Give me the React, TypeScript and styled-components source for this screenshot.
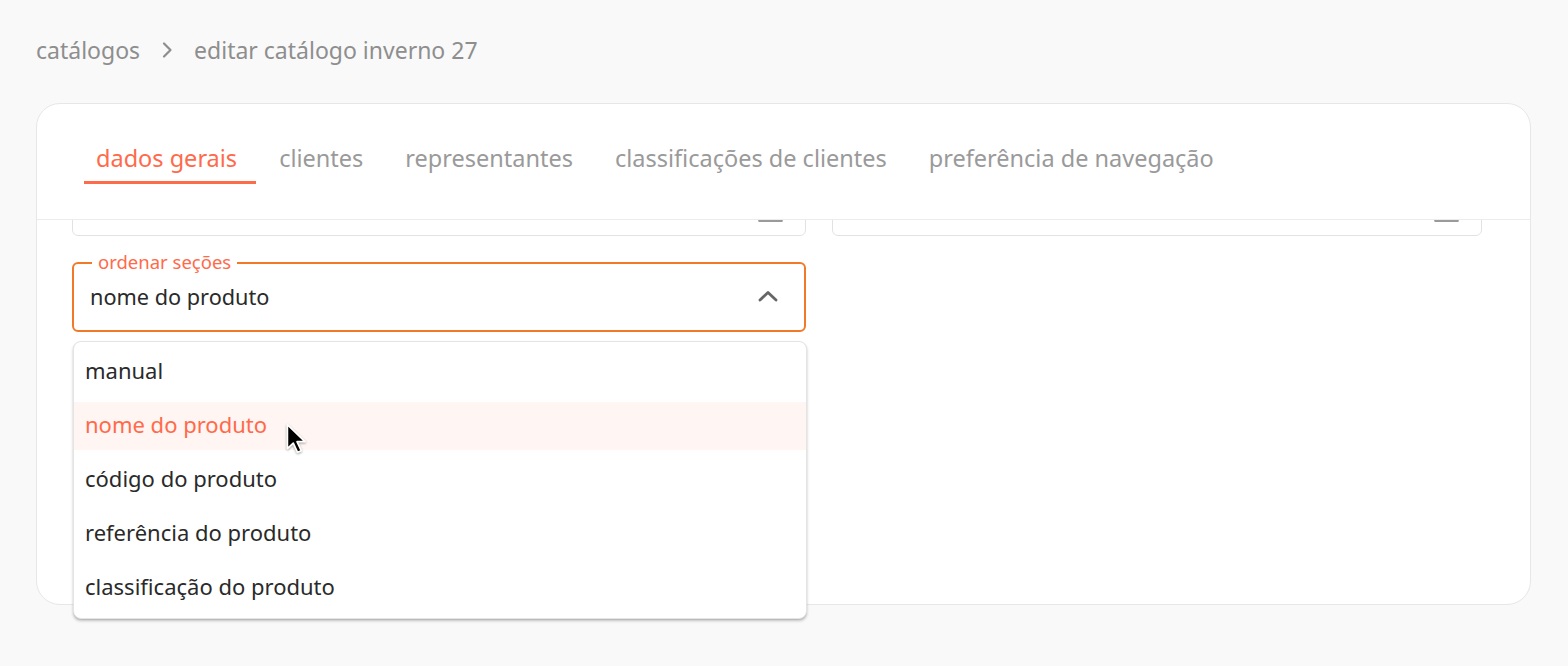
import React, { useLayoutEffect, useRef } from "react";
import styled, { createGlobalStyle } from "styled-components";

const GlobalStyle = createGlobalStyle`
  html, body {
    margin: 0;
    padding: 0;
    background: #f9f9f9;
    font-family: "Noto Sans", "Open Sans", sans-serif;
  }
  * { box-sizing: border-box; }
`;

const Page = styled.div`
  position: relative;
  width: 1568px;
  height: 666px;
  padding: 35px 37px 0 36px;
  overflow: hidden;
`;

const Breadcrumb = styled.nav`
  display: flex;
  align-items: center;
  gap: 21px;
  height: 30px;
  font-size: 23px;
  line-height: 30px;
  color: #8e8e8e;
`;

const Crumb = styled.span`
  white-space: nowrap;
`;

const Card = styled.section`
  margin-top: 38px;
  width: 1495px;
  height: 502px;
  background: #ffffff;
  border: 1px solid #e7e7e7;
  border-radius: 24px;
  display: flex;
  flex-direction: column;
  overflow: hidden;
`;

const TabBar = styled.div`
  flex: none;
  display: flex;
  align-items: flex-start;
  gap: 11px;
  height: 116px;
  padding: 30px 0 0 47px;
  border-bottom: 1px solid #ececec;
`;

const Tab = styled.button<{ $active?: boolean }>`
  height: 50px;
  padding: 0 19px 0 12px;
  border: none;
  background: none;
  font-family: inherit;
  font-size: 23.5px;
  line-height: 46px;
  color: ${(p) => (p.$active ? "#ff6a4a" : "#9a9a9a")};
  border-bottom: 3px solid ${(p) => (p.$active ? "#ff6a4a" : "transparent")};
  white-space: nowrap;
  cursor: pointer;
`;

const ScrollArea = styled.div`
  flex: 1;
  overflow-y: auto;
  scrollbar-width: none;
  &::-webkit-scrollbar { display: none; }
`;

const FormGrid = styled.div`
  display: grid;
  grid-template-columns: 734px 650px;
  column-gap: 26px;
  row-gap: 26px;
  align-items: start;
  padding: 24px 48px 400px 35px;
`;

const TextField = styled.div`
  height: 56px;
  border: 1px solid #e2e2e2;
  border-radius: 6px;
  display: flex;
  align-items: flex-end;
  justify-content: flex-end;
  padding: 0 22px 13px 0;
`;

const SelectBox = styled.div`
  position: relative;
  height: 70px;
  border: 2px solid #f07a2a;
  border-radius: 6px;
  display: flex;
  align-items: center;
  justify-content: space-between;
  padding: 0 26px 2px 16px;
`;

const FloatLabel = styled.span`
  position: absolute;
  top: -13px;
  left: 18px;
  padding: 0 6px;
  background: #ffffff;
  font-size: 18.5px;
  line-height: 22px;
  color: #ff6a4a;
`;

const SelectValue = styled.span`
  font-size: 21.7px;
  color: #2a2a2a;
`;

const Menu = styled.ul`
  position: absolute;
  top: 341px;
  left: 73px;
  width: 734px;
  margin: 0;
  padding: 6px 0;
  list-style: none;
  background: #ffffff;
  border: 1px solid #e4e4e4;
  border-radius: 8px;
  box-shadow: 0 2px 3px rgba(0, 0, 0, 0.22), 0 1px 1px rgba(0, 0, 0, 0.08);
  display: flex;
  flex-direction: column;
  gap: 6px;
`;

const MenuItem = styled.li<{ $selected?: boolean }>`
  height: 48px;
  display: flex;
  align-items: center;
  padding: 0 0 5px 11px;
  font-size: 22px;
  color: ${(p) => (p.$selected ? "#ff6a4a" : "#2a2a2a")};
  background: ${(p) => (p.$selected ? "#fff5f2" : "transparent")};
`;

const Pointer = styled.svg`
  position: absolute;
  top: 423px;
  left: 285px;
  filter: drop-shadow(0 1px 1px rgba(0, 0, 0, 0.35));
`;

const ChevronRight = () => (
  <svg width="12" height="18" viewBox="0 0 12 18" fill="none">
    <path d="M3 2.5 L9.5 9 L3 15.5" stroke="#8e8e8e" strokeWidth="2.2" strokeLinecap="round" strokeLinejoin="round" />
  </svg>
);

const ChevronUp = () => (
  <svg width="20" height="12" viewBox="0 0 20 12" fill="none">
    <path d="M2 10 L10 2.5 L18 10" stroke="#666666" strokeWidth="2.8" strokeLinecap="round" strokeLinejoin="round" />
  </svg>
);

const CalendarIcon = () => (
  <svg width="25" height="24" viewBox="0 0 25 24" fill="none">
    <rect x="1" y="2" width="23" height="21" rx="2" stroke="#9a9a9a" strokeWidth="2" />
    <rect x="1" y="7" width="23" height="2" fill="#9a9a9a" />
    <rect x="0.5" y="22" width="24" height="2" fill="#9a9a9a" />
  </svg>
);

const tabs = [
  "dados gerais",
  "clientes",
  "representantes",
  "classificações de clientes",
  "preferência de navegação",
];

const options = [
  "manual",
  "nome do produto",
  "código do produto",
  "referência do produto",
  "classificação do produto",
];

export default function App() {
  const scrollRef = useRef<HTMLDivElement>(null);
  useLayoutEffect(() => {
    if (scrollRef.current) scrollRef.current.scrollTop = 64;
  }, []);

  return (
    <>
      <GlobalStyle />
      <Page>
        <Breadcrumb>
          <Crumb>catálogos</Crumb>
          <ChevronRight />
          <Crumb>editar catálogo inverno 27</Crumb>
        </Breadcrumb>
        <Card>
          <TabBar>
            {tabs.map((t, i) => (
              <Tab key={t} $active={i === 0}>
                {t}
              </Tab>
            ))}
          </TabBar>
          <ScrollArea ref={scrollRef}>
            <FormGrid>
              <TextField>
                <CalendarIcon />
              </TextField>
              <TextField>
                <CalendarIcon />
              </TextField>
              <SelectBox>
                <FloatLabel>ordenar seções</FloatLabel>
                <SelectValue>nome do produto</SelectValue>
                <ChevronUp />
              </SelectBox>
            </FormGrid>
          </ScrollArea>
        </Card>
        <Menu>
          {options.map((o) => (
            <MenuItem key={o} $selected={o === "nome do produto"}>
              {o}
            </MenuItem>
          ))}
        </Menu>
        <Pointer width="24" height="32" viewBox="0 0 22 30">
          <path
            d="M2 1.5 L2 24 L7.5 18.8 L11.5 27.5 L15 26 L11 17.5 L18.5 17.5 Z"
            fill="#000000"
            stroke="#ffffff"
            strokeWidth="1.6"
            strokeLinejoin="round"
          />
        </Pointer>
      </Page>
    </>
  );
}
